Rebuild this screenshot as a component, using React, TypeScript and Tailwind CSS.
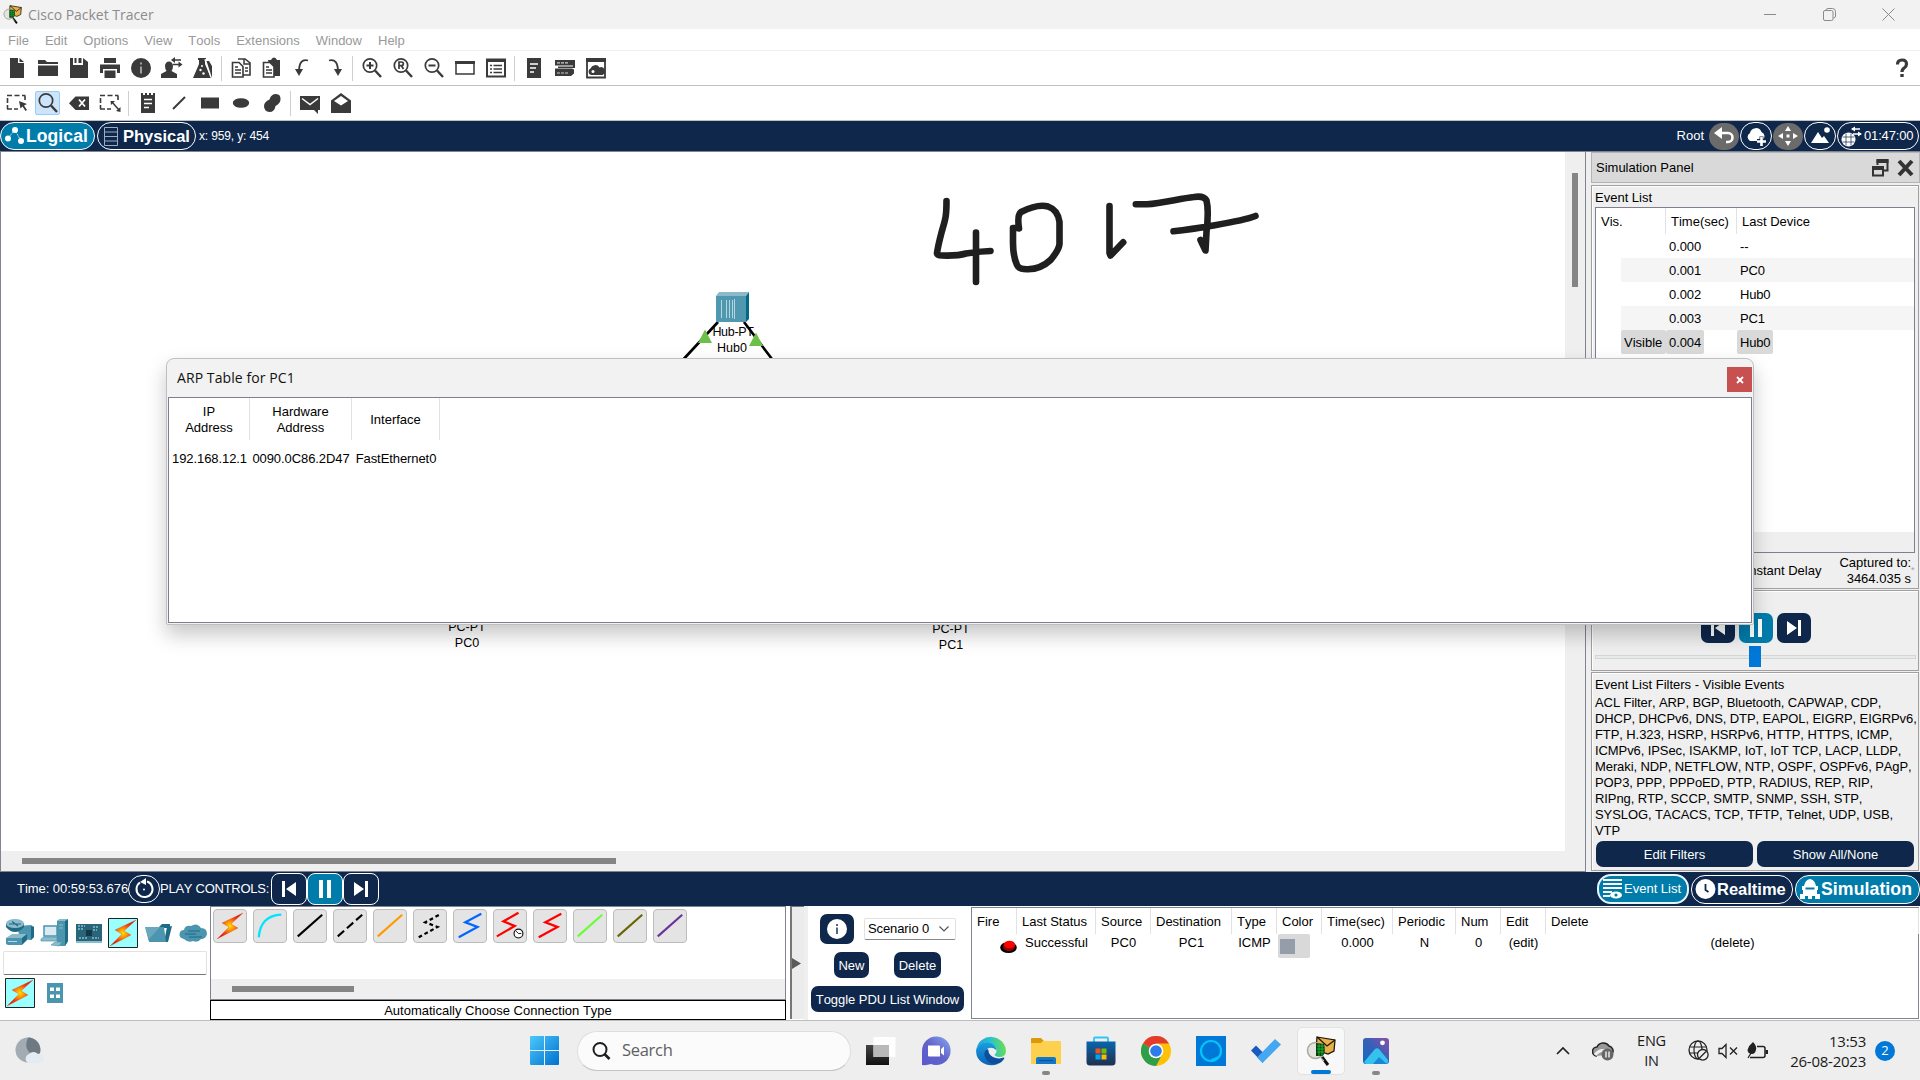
import React from 'react';

type P = { children?: React.ReactNode };
const NAVY = '#0e274b';
const INK = '#3a3a3a';

function Ic({ children, w = 24, h = 24, vb }: P & { w?: number; h?: number; vb?: string }) {
  return (
    <svg width={w} height={h} viewBox={vb ?? `0 0 ${w} ${h}`} fill="none" className="block shrink-0">
      {children}
    </svg>
  );
}

function Cell({ children, on }: P & { on?: boolean }) {
  return (
    <div className="flex w-[31px] shrink-0 items-center justify-center">
      {on ? (
        <div className="flex h-6 w-[25px] items-center justify-center rounded-[2px] border border-[#99cbf5] bg-[#cce5fa]">{children}</div>
      ) : (
        children
      )}
    </div>
  );
}
const Sep = () => <div className="ml-[3px] mr-[3px] h-[25px] w-px shrink-0 bg-[#d0d0d0]" />;

function TracerIcon({ s = 30 }: { s?: number }) {
  return (
    <Ic w={s} h={s} vb="0 0 30 30">
      <path d="M11 1 L29 4 L28 15 L22 18 L10 14Z" fill="#e7b04a" stroke="#1a1206" strokeWidth="1.2" />
      <path d="M11 1 L21 10 L29 4" stroke="#1a1206" strokeWidth="1.2" />
      <circle cx="9.5" cy="14.5" r="8" fill="#e4e4de" stroke="#a8a8a0" strokeWidth="1.5" />
      <path d="M10 7 L18 8 Q20 15 17 20 L10 20Z" fill="#0b3b12" />
      <path d="M11 10h7M11 13h7M11 16h7M13 8v12M16 8v12" stroke="#17b52c" strokeWidth="1" />
      <path d="M16 21 L22 29" stroke="#111" strokeWidth="3" />
      <path d="M15.5 22 L18 25" stroke="#ccc" strokeWidth="1" />
    </Ic>
  );
}

const Search = ({ t }: { t?: string }) => (
  <Ic>
    <circle cx="10" cy="9.500" r="6.700" stroke={INK} strokeWidth="1.700" />
    <path d="M15 14.500L21 21" stroke={INK} strokeWidth="2.400" />
    {t === '+' && <path d="M10 6v7M6.500 9.500h7" stroke={INK} strokeWidth="2" />}
    {t === '-' && <path d="M6.500 9.500h7" stroke={INK} strokeWidth="2" />}
    {t === 'R' && <path d="M8 13V6h2.500a1.800 1.800 0 0 1 0 3.700H8m2.500 0l2 3.300" stroke={INK} strokeWidth="1.700" />}
  </Ic>
);

function Toolbar1() {
  return (
    <div className="flex h-[35px] items-center border-b border-[#c0c0c0] pl-px">
      <Cell><Ic><path d="M5 2h8v5h6v15H5z M14.500 2l4.500 4h-4.500z" fill={INK} /></Ic></Cell>
      <Cell><Ic><path d="M2 4h7l2 2h11v2H2z M2 9.500h20V20H2z" fill={INK} /></Ic></Cell>
      <Cell><Ic><path d="M3 2h3v7h10V2l5 4v16H3z M11.500 2h3v5h-3z M7.500 2h2v5h-2z" fill={INK} /></Ic></Cell>
      <Cell><Ic><path d="M6 2h12v5H6z M2 8.500h20V17h-3v-4H5v4H2z M6.500 14.500h11V22h-11z" fill={INK} /></Ic></Cell>
      <Cell><Ic><circle cx="12" cy="12" r="10" fill={INK} /><path d="M12 6.500v2M12 10.500v7" stroke="#bbb" strokeWidth="1.600" /></Ic></Cell>
      <Cell>
        <Ic>
          <path d="M5 10a4 4.500 0 1 1 8 0q0 3-1.500 5l5.500 3v4H1v-4l5.500-3Q5 13 5 10z" fill={INK} />
          <path d="M13 4h8M13 8.500h8" stroke={INK} strokeWidth="1.500" /><path d="M11 4l4-3v6z M22.500 8.500l-4-3v6z" fill={INK} />
        </Ic>
      </Cell>
      <Cell>
        <Ic>
          <path d="M7 2h8v2h-1v4l6 14H2L8 8V4H7z" fill={INK} />
          <path d="M15 3l6 18" stroke="#fff" strokeWidth="3.500" /><path d="M15.500 5l5.500 17v-12l-3-5z" fill={INK} />
          <circle cx="9.500" cy="14" r="1.200" fill="#fff" /><circle cx="12.500" cy="17.500" r="1.200" fill="#fff" /><circle cx="11" cy="10" r="1" fill="#fff" />
        </Ic>
      </Cell>
      <Sep />
      <Cell>
        <Ic>
          <path d="M9 3h7l5 4v12h-8" fill="#fff" stroke={INK} strokeWidth="1.600" /><path d="M15 3v5h6" stroke={INK} strokeWidth="1.500" />
          <path d="M3.500 6.500H10l4 4V21H3.500z" fill="#fff" stroke={INK} strokeWidth="1.600" /><path d="M6 11h3M6 14h6M6 17h6M16 12h3M16 15h3" stroke={INK} strokeWidth="1.400" />
        </Ic>
      </Cell>
      <Cell>
        <Ic>
          <path d="M8 4h3q1-2.500 3-2.500T17 4h3v16h-8z" fill={INK} />
          <path d="M3.500 6.500H10l4 4V21H3.500z" fill="#fff" stroke={INK} strokeWidth="1.600" /><path d="M6 11h3M6 14h6M6 17h6" stroke={INK} strokeWidth="1.400" />
        </Ic>
      </Cell>
      <Cell><Ic><path d="M17 4.500Q8 2 8 16" stroke={INK} strokeWidth="1.800" /><path d="M4 13h8L8 20z" fill={INK} /></Ic></Cell>
      <Cell><Ic><path d="M7 4.500Q16 2 16 16" stroke={INK} strokeWidth="1.800" /><path d="M12 13h8L16 20z" fill={INK} /></Ic></Cell>
      <Sep />
      <Cell><Search t="+" /></Cell>
      <Cell><Search t="R" /></Cell>
      <Cell><Search t="-" /></Cell>
      <Cell><Ic><path d="M3 6h18v12H3z" stroke={INK} strokeWidth="1.500" /><path d="M2 5h20v3H2z" fill={INK} /></Ic></Cell>
      <Cell><Ic><path d="M3 3.500h18v17H3z" stroke={INK} strokeWidth="2" /><path d="M2 3h20v3H2z" fill={INK} /><path d="M6 9.500h2M6 13h2M6 16.500h2M9.500 9.500H18M9.500 13H18M9.500 16.500H18" stroke={INK} strokeWidth="1.600" /></Ic></Cell>
      <Sep />
      <Cell><Ic><path d="M5 2h14v20H5z" fill={INK} /><path d="M8 8h8M8 12h6M8 16h4" stroke="#fff" strokeWidth="1.500" /></Ic></Cell>
      <Cell><Ic><path d="M2 4h18v5.500H2z M22 4v8H5v-1.500h15V4z M2 12.500h17l2 1v4l-3 2.500H2z" fill={INK} /><path d="M4 6.800h12M4 17h12" stroke="#ccc" strokeWidth="1.200" strokeDasharray="3 1" /></Ic></Cell>
      <Cell><Ic><path d="M3 3h18v18.500H3z" stroke={INK} strokeWidth="1.800" /><path d="M2 2h20v4H2z" fill={INK} /><path d="M7 19a3.500 3.500 0 0 1-.5-6.500 5 5 0 0 1 9-1 4 4 0 0 1 3 7.500z" fill={INK} /><circle cx="9" cy="15.500" r="1.500" fill="#fff" /></Ic></Cell>
      <div className="ml-auto pr-[10px]">
        <Ic w={16} h={22}><path d="M3.500 7.500q0-4.500 4.500-4.500t4.500 4q0 2.500-2.300 4T8 15" stroke={INK} strokeWidth="3.200" /><path d="M6.300 17h3.400v3H6.300z" fill={INK} /></Ic>
      </div>
    </div>
  );
}

function Toolbar2() {
  const dash = 'M2 4.500h5M9.500 4.500h5M17 4.500h3.500M2.500 7v5M2.500 14v4M2 18h5M9 18h4M20 5v4';
  return (
    <div className="flex h-[35px] items-center border-b border-[#c0c0c0] pl-px">
      <Cell><Ic><path d={dash} stroke={INK} strokeWidth="1.600" /><path d="M14 10l8 3-3 1.500 3 4.500-1.500 1-3-4.500-2 2z" fill={INK} /></Ic></Cell>
      <Cell on><Search /></Cell>
      <Cell><Ic><path d="M8.500 5.500H22v13.500H8.500L2 12.300z" fill={INK} /><path d="M12 8.500l6 7M18 8.500l-6 7" stroke="#fff" strokeWidth="1.800" /></Ic></Cell>
      <Cell><Ic><path d={dash} stroke={INK} strokeWidth="1.600" /><path d="M14 11l7 8" stroke={INK} strokeWidth="1.500" /><path d="M12.500 10h4.500l-4 4zM22.500 21v-5l-4.500 4z" fill={INK} /></Ic></Cell>
      <Sep />
      <Cell><Ic><path d="M5 2h2v2h2V2h2v2h2V2h2v2h2V2h2v20H5z" fill={INK} /><path d="M8 8.500h8M8 12.500h8M8 16.500h5" stroke="#fff" strokeWidth="1.400" /></Ic></Cell>
      <Cell><Ic><path d="M6 18L18 6" stroke={INK} strokeWidth="2" /></Ic></Cell>
      <Cell><Ic><path d="M3 6.500h18v11H3z" fill={INK} /></Ic></Cell>
      <Cell><Ic><ellipse cx="12" cy="12" rx="8.200" ry="4.800" fill={INK} /></Ic></Cell>
      <Cell><Ic><path d="M9.500 8.500Q11 3 16 3q5 0 4.500 6-.5 3.500-5 6-1 6-6 6-5.500-.5-5.500-6Q4 11 9.500 8.500z" fill={INK} /></Ic></Cell>
      <Sep />
      <Cell><Ic><path d="M2 5h20v14h-2v4l-4-4H2z" fill={INK} /><path d="M4 7.500l8 6 8-6" stroke="#fff" strokeWidth="1.500" /></Ic></Cell>
      <Cell><Ic><path d="M2 9.500L12 2l10 7.500V22H2z" fill={INK} /><path d="M5 10l7-5 7 5-7 4.500z" fill="#fff" /></Ic></Cell>
    </div>
  );
}

const pill = 'flex items-center rounded-[14px] border border-white text-white';

function NavBar() {
  return (
    <div className="flex h-[30px] items-center bg-[#0e274b] text-[13px] text-white">
      <div className={`${pill} h-7 w-[95px] bg-[#007cab] pl-[3px]`}>
        <Ic w={22} h={24}><path d="M4 14L11 6l6 11" stroke="#bfe3f0" strokeWidth="1" strokeDasharray="2 1" /><circle cx="4" cy="14.500" r="3" fill="#fff" /><circle cx="11" cy="6" r="3" fill="#fff" /><circle cx="17" cy="17" r="3" fill="#fff" /></Ic>
        <span className="text-[17.500px] font-bold tracking-[0.1px]">Logical</span>
      </div>
      <div className={`${pill} ml-[2px] h-7 w-[99px] pl-[5px]`}>
        <Ic w={17} h={22}><path d="M1.500 2.500h13v18h-13zM1.500 7h13M1.500 11.500h13M1.500 16h13" stroke="#9dacc4" strokeWidth="1" /></Ic>
        <span className="ml-[3px] text-[16.500px] font-bold">Physical</span>
      </div>
      <span className="ml-[3px] text-[12px] tracking-[-0.150px]">x: 959, y: 454</span>
      <span className="ml-auto">Root</span>
      <div className="ml-[5px] flex h-[27px] w-[30px] items-center justify-center rounded-full bg-[#6b6b6b]">
        <Ic w={22} h={20}><path d="M6 7h9a4.500 4.500 0 0 1 0 9h-2" stroke="#fff" strokeWidth="2.600" /><path d="M9 1v12L1 7z" fill="#fff" /></Ic>
      </div>
      <div className="ml-[1px] flex h-7 w-8 items-center justify-center rounded-[14px] border border-white">
        <Ic w={24} h={22}><path d="M6 16a4.500 4.500 0 0 1 0-8 6 6 0 0 1 11.500-1 4.500 4.500 0 0 1 1 8v1z" fill="#fff" /><path d="M17.500 11.500v9M13 16h9" stroke={NAVY} strokeWidth="4" /><path d="M17.500 12v9M13 16.500h9" stroke="#fff" strokeWidth="2.600" /></Ic>
      </div>
      <div className="ml-[1px] flex h-[27px] w-[30px] items-center justify-center rounded-full bg-[#6b6b6b]">
        <Ic w={20} h={20}><path d="M10 0l3 5H7zM10 20l3-5H7zM0 10l5-3v6zM20 10l-5-3v6z" fill="#fff" /><path d="M8.500 8.500h3v3h-3z" fill="#fff" /></Ic>
      </div>
      <div className="ml-[1px] flex h-7 w-8 items-center justify-center rounded-[14px] border border-white">
        <Ic w={22} h={20}><path d="M2 17L9 6l4 6 2-2 5 7z" fill="#fff" /><circle cx="18" cy="4" r="2.800" fill="#fff" /></Ic>
      </div>
      <div className={`${pill} ml-[1px] mr-px h-7 w-[82px] pl-[3px]`}>
        <Ic w={22} h={24}><circle cx="7.500" cy="15.500" r="7" fill="#fff" /><path d="M1.500 13h12M1.500 18h12M5 9.500v12M10 9.500v12" stroke={NAVY} strokeWidth=".7" /><path d="M11 5h8M12 10h8" stroke="#fff" strokeWidth="1.500" /><path d="M10 5l4-2.500v5zM21 10l-4-2.500v5z" fill="#fff" /></Ic>
        <span className="ml-px tracking-[-0.150px]">01:47:00</span>
      </div>
    </div>
  );
}

function Canvas() {
  return (
    <div className="relative h-full w-full overflow-hidden text-center text-[12.500px] leading-4">
      <svg className="absolute left-0 top-0" width="1564" height="699" viewBox="1 152 1564 699" fill="none">
        <path d="M718 322L680 363M744 322L775 363" stroke="#000" strokeWidth="2.600" />
        <path d="M716 296h30v26h-30z" fill="#4f98b0" />
        <path d="M716 296l3-4h30l-3 4z" fill="#8ab9c9" /><path d="M746 296l3-4v27l-3 3z" fill="#006a87" />
        <path d="M721.500 300v18M726.500 300v18M729.500 300v18M732.500 300v18M734.500 299v20" stroke="#b5d6e0" strokeWidth="1" />
        <path d="M705 329.500l7 13.500h-14zM756 332.500l7 13.500h-14z" fill="#6cc04a" />
        <g stroke="#1f1f1f" strokeWidth="6.600" strokeLinecap="round" strokeLinejoin="round">
          <path d="M946.500 201C946.500 218 945 220 941.300 233.300Q938 246 937 253Q937 255.500 942 255.500Q958 256 966 253.500Q978 251.500 990.500 251M976 232.500V282" />
          <path d="M1019 228.500Q1017 215 1021 212C1031 207 1041 204.500 1048 206.500Q1058 210 1059.500 222V244Q1059 250 1050.500 260Q1041 269 1028 269.200Q1019 269.500 1017 265Q1013 256 1013 243V228H1018" />
          <path d="M1109.500 206L1109.500 253L1110.500 255.500L1123.200 242.300" />
          <path d="M1135.800 204.300H1147C1162 203.500 1180 198.500 1194 197Q1204 195.500 1206.500 200.500Q1209 210 1206.500 232L1205.500 250.500L1200.500 240M1173.500 231.300C1190 229.500 1240 222 1255.500 216" />
        </g>
      </svg>
      <div className="absolute left-[708px] top-[172px] w-[48px] whitespace-nowrap tracking-tight">Hub-PT</div>
      <div className="absolute left-[707px] top-[188px] w-[48px]">Hub0</div>
      <div className="absolute left-[436px] top-[467px] w-[60px]">PC-PT<br />PC0</div>
      <div className="absolute left-[920px] top-[469px] w-[60px]">PC-PT<br />PC1</div>
    </div>
  );
}

function ArpDialog() {
  const cols: [string[], string, string][] = [
    [['IP', 'Address'], '192.168.12.1', 'w-[81px]'],
    [['Hardware', 'Address'], '0090.0C86.2D47', 'w-[102px]'],
    [['Interface'], 'FastEthernet0', 'w-[88px]'],
  ];
  return (
    <div className="absolute left-[166px] top-[358px] z-10 flex h-[267px] w-[1588px] flex-col rounded-t-[8px] rounded-b-[2px] border border-[#bdc0c0] bg-[#f2f2f2] px-px pb-px shadow-[0_10px_20px_rgba(0,0,0,0.22)]">
      <div className="flex h-[38px] items-center pl-[9px]">
        <span className="pb-[2px] font-['Open_Sans','Noto_Sans',sans-serif] text-[14px] tracking-[0.080px] text-[#111]">ARP Table for PC1</span>
        <div className="ml-auto mt-2 flex size-[25px] items-center justify-center self-start bg-[#c75050]">
          <Ic w={8} h={8}><path d="M1 1l6 6M7 1L1 7" stroke="#fff" strokeWidth="1.800" /></Ic>
        </div>
      </div>
      <div className="flex flex-1 items-start border border-[#7f808f] bg-white text-center leading-4">
        {cols.map(([head, val, w], i) => (
          <div key={i} className={w}>
            <div className="flex h-[42px] flex-col justify-center border-r border-[#e2e2e2] pt-[2px]">{head.map((x) => <div key={x}>{x}</div>)}</div>
            <div className="mt-[11px] whitespace-nowrap tracking-[-0.080px]">{val}</div>
          </div>
        ))}
      </div>
    </div>
  );
}

const rows: [string, string, string][] = [
  ['', '0.000', '--'],
  ['', '0.001', 'PC0'],
  ['', '0.002', 'Hub0'],
  ['', '0.003', 'PC1'],
  ['Visible', '0.004', 'Hub0'],
];
const filters = [
  'ACL Filter, ARP, BGP, Bluetooth, CAPWAP, CDP,',
  'DHCP, DHCPv6, DNS, DTP, EAPOL, EIGRP, EIGRPv6,',
  'FTP, H.323, HSRP, HSRPv6, HTTP, HTTPS, ICMP,',
  'ICMPv6, IPSec, ISAKMP, IoT, IoT TCP, LACP, LLDP,',
  'Meraki, NDP, NETFLOW, NTP, OSPF, OSPFv6, PAgP,',
  'POP3, PPP, PPPoED, PTP, RADIUS, REP, RIP,',
  'RIPng, RTP, SCCP, SMTP, SNMP, SSH, STP,',
  'SYSLOG, TACACS, TCP, TFTP, Telnet, UDP, USB,',
  'VTP',
];

const Prev = () => <Ic w={18} h={18}><path d="M2 1h3v16H2zM16 2v14L6 9z" fill="#fff" /></Ic>;
const Next = () => <Ic w={18} h={18}><path d="M13 1h3v16h-3zM2 2v14l10-7z" fill="#fff" /></Ic>;
const Pause = () => <Ic w={18} h={20}><path d="M3 1h4v18H3zM11 1h4v18h-4z" fill="#fff" /></Ic>;
const group = 'border border-[#a0a0a0] bg-[#efefef] shadow-[inset_1px_1px_0_#fff]';

function SimulationPanel() {
  return (
    <div className="flex w-[334px] flex-col bg-[#efefef] pl-[5px]">
      <div className="flex h-[31px] items-center border border-[#b4b4b4] bg-[#d9d9d9] pl-1 pr-[5px]">
        <span className="pt-px">Simulation Panel</span>
        <div className="ml-auto flex items-center gap-[8px]">
          <Ic w={17} h={19}><path d="M5.500 7V2.500H15.500V12.500H12" stroke="#333" strokeWidth="2" /><path d="M4.500 1h12v4h-12z" fill="#333" /><path d="M1 10h10v7.500H1z" stroke="#333" strokeWidth="2" /><path d="M0 8h12v4H0z" fill="#333" /></Ic>
          <Ic w={17} h={18}><path d="M2 2l13 14M15 2L2 16" stroke="#333" strokeWidth="4" /></Ic>
        </div>
      </div>
      <div className={`${group} mt-[2px] flex h-[404px] w-[328px] flex-col px-[3px]`}>
        <div className="flex h-[21px] items-center pt-[2px]">Event List</div>
        <div className="flex h-[346px] flex-col border border-[#7f808f] bg-white">
          <div className="flex h-[26px] items-center">
            <span className="flex h-full w-[70px] items-center border-r border-[#e2e2e2] pl-[5px] pt-[2px]">Vis.</span>
            <span className="flex h-full w-[71px] items-center border-r border-[#e2e2e2] pl-[5px] pt-[2px]">Time(sec)</span>
            <span className="pl-[5px] pt-[2px]">Last Device</span>
          </div>
          {rows.map(([v, t, d], i) => (
            <div key={t} className={`ml-[25px] flex h-6 items-center ${i % 2 ? 'bg-[#f5f5f5]' : ''}`}>
              <div className="w-[45px]">{v && <span className="flex h-6 w-[45px] items-center rounded-[2px] bg-[#d9d9d9] pl-[3px] pt-px">{v}</span>}</div>
              <div className="w-[71px]"><span className={`flex h-6 w-[38px] items-center rounded-[2px] pl-[3px] pt-px tracking-[-0.100px] ${v ? 'bg-[#d9d9d9]' : ''}`}>{t}</span></div>
              <span className={`flex h-6 w-[36px] items-center rounded-[2px] pl-[3px] pt-px tracking-[-0.200px] ${v ? 'bg-[#d9d9d9]' : ''}`}>{d}</span>
            </div>
          ))}
          <div className="mt-auto h-5 bg-[#efefef]" />
        </div>
        <div className="flex flex-1 items-center justify-end leading-4">
          <span className="mr-[18px]">Constant Delay</span>
          <span className="text-right">Captured to:<br />3464.035 s</span>
          <span className="-mr-px mt-[-2px] w-[5px] text-[9px] text-[#a0a0a0]">*</span>
        </div>
      </div>
      <div className={`${group} mt-px flex h-[81px] w-[328px] flex-col items-center pt-[22px]`}>
        <div className="flex gap-1 pl-px">
          <div className="flex h-[30px] w-[34px] items-center justify-center rounded-[7px] bg-[#0e274b]"><Prev /></div>
          <div className="flex h-[30px] w-[34px] items-center justify-center rounded-[7px] bg-[#007cab]"><Pause /></div>
          <div className="flex h-[30px] w-[34px] items-center justify-center rounded-[7px] bg-[#0e274b]"><Next /></div>
        </div>
        <div className="mt-[3px] flex h-[21px] w-[321px] items-center justify-center">
          <div className="h-1 flex-1 border border-r-0 border-[#d4d6d6] bg-[#e7eaea]" />
          <div className="h-[21px] w-3 bg-[#0078d7]" />
          <div className="h-1 flex-1 border border-l-0 border-[#d4d6d6] bg-[#e7eaea]" />
        </div>
      </div>
      <div className={`${group} mt-px flex h-[199px] w-[328px] flex-col px-[3px]`}>
        <div className="mt-[3px] leading-[18px]">Event List Filters - Visible Events</div>
        <div className="mt-px whitespace-nowrap leading-4 tracking-[-0.090px]">{filters.map((f) => <div key={f}>{f}</div>)}</div>
        <div className="mt-[2px] flex gap-1 px-px text-white">
          <div className="flex h-[26px] flex-1 items-center justify-center rounded-[7px] bg-[#0e274b] pt-px">Edit Filters</div>
          <div className="flex h-[26px] flex-1 items-center justify-center rounded-[7px] bg-[#0e274b] pt-px">Show All/None</div>
        </div>
      </div>
    </div>
  );
}

function Workspace() {
  return (
    <div className="flex h-[721px] border-t border-[#80848f]">
      <div className="flex w-[1586px] flex-col border-x border-b border-[#80848f]">
        <div className="flex h-[699px]">
          <div className="w-[1564px]"><Canvas /></div>
          <div className="flex w-5 justify-center bg-[#efefef] pt-[21px]"><div className="h-[114px] w-[6px] bg-[#858585]" /></div>
        </div>
        <div className="flex h-5 items-center bg-[#efefef] pl-[21px]"><div className="h-[6px] w-[594px] bg-[#858585]" /></div>
      </div>
      <SimulationPanel />
    </div>
  );
}

function TimeBar() {
  const b = 'flex h-8 w-9 items-center justify-center rounded-[8px] border border-white';
  return (
    <div className="flex h-[34px] items-center bg-[#0e274b] pl-[17px] text-white">
      <span className="w-[111px] whitespace-nowrap tracking-[-0.050px]">Time: 00:59:53.676</span>
      <div className="flex h-7 w-8 items-center justify-center rounded-[14px] border border-white">
        <Ic w={22} h={22}><path d="M7 4.500a8 8 0 1 0 7 -1" stroke="#fff" strokeWidth="2" /><path d="M13 0v7L7 4z" fill="#fff" /><circle cx="11" cy="11.500" r="1" fill="#fff" /></Ic>
      </div>
      <span className="w-[111px] whitespace-nowrap tracking-[-0.260px]">PLAY CONTROLS:</span>
      <div className={b}><Prev /></div>
      <div className={`${b} bg-[#007cab]`}><Pause /></div>
      <div className={b}><Next /></div>
      <div className="ml-auto flex h-[30px] w-[92px] items-center rounded-[14px] border-2 border-[#e8f4f8] bg-[#007cab] pl-[3px]">
        <Ic w={22} h={22}><path d="M1 2h19M1 6h19M1 10h19M1 14h9M1 18h7" stroke="#fff" strokeWidth="1.800" /><ellipse cx="14" cy="17" rx="6" ry="3.600" fill="#fff" /><circle cx="14" cy="17" r="1.600" fill="#007cab" /></Ic>
        <span className="whitespace-nowrap">Event List</span>
      </div>
      <div className={`${pill} ml-[2px] h-[29px] w-[102px] pl-[3px]`}>
        <Ic w={22} h={22}><circle cx="10.500" cy="11" r="10" fill="#fff" /><path d="M10.500 6v6l3 2" stroke={NAVY} strokeWidth="1.800" /></Ic>
        <span className="text-[16.500px] font-bold">Realtime</span>
      </div>
      <div className={`${pill} ml-[2px] h-[29px] w-[125px] bg-[#007cab] pl-[3px]`}>
        <Ic w={22} h={22}><path d="M5 8q1-6 6-7 5 1 6 7h2v4h-1v4h3v5h-5v-3h-3v3h-4v-3H6v3H1v-5h3v-4H3V8z" fill="#fff" /><path d="M6.500 10.500h9" stroke="#007cab" strokeWidth="2" /></Ic>
        <span className="text-[17.700px] font-bold tracking-[0.070px]">Simulation</span>
      </div>
    </div>
  );
}

function Bolt({ boxed, s = 30 }: { boxed?: boolean; s?: number }) {
  return (
    <Ic w={s} h={s} vb="0 0 30 30">
      <defs><radialGradient id="bolt"><stop offset="0" stopColor="#ffe000" /><stop offset=".3" stopColor="#ff9a00" /><stop offset=".7" stopColor="#f43a10" /><stop offset="1" stopColor="#e01818" /></radialGradient></defs>
      {boxed && <path d="M.5.5h29v29H.5z" fill="#99ffff" stroke="#222" />}
      <path d="M28 2L7 12l7 4L2 28l21-11-7-4z" fill="url(#bolt)" stroke="#d04818" strokeWidth=".3" />
    </Ic>
  );
}

function Connections() {
  const line = (c: string, dash?: string) => <path d="M4 28L30 5" stroke={c} strokeWidth="2.200" strokeDasharray={dash} />;
  const zig = (c: string, dash?: string) => <path d="M5 29l20-11-13-5L29 4" stroke={c} strokeWidth="2.400" strokeDasharray={dash} />;
  const items = [
    <g key="a" />,
    <path key="b" d="M5 29Q7 6 29 5" stroke="#00e5ff" strokeWidth="2.400" />,
    line('#000'), line('#000', '9 4'), line('#ff9900'), zig('#000', '4 3'), zig('#0066ff'),
    <g key="h"><path d="M3 28l19-11-12-5L26 3" stroke="#f00" strokeWidth="2.400" /><circle cx="26" cy="25" r="4.700" fill="#fff" stroke="#111" strokeWidth="1.200" /><path d="M23.500 22.500l2.500 2.500h3" stroke="#111" /></g>,
    zig('#f00'), line('#66ff33'), line('#666600'), line('#663399'),
  ];
  return (
    <div className="flex w-[576px] flex-col">
      <div className="flex h-[94px] flex-col border border-[#80848f] bg-white">
        <div className="flex flex-1 gap-[6px] pl-[2px] pt-[2px]">
          {items.map((x, i) => (
            <div key={i} className="flex size-[34px] items-center justify-center rounded-[4px] border border-[#bcbcbc] bg-[#e4e4e4]">
              {i === 0 ? <Bolt /> : <Ic w={32} h={32} vb="0 0 34 34">{x}</Ic>}
            </div>
          ))}
        </div>
        <div className="flex h-5 items-center bg-[#efefef] pl-[21px]"><div className="h-[6px] w-[122px] bg-[#858585]" /></div>
      </div>
      <div className="flex h-5 items-center justify-center border border-black bg-white pt-[2px]">Automatically Choose Connection Type</div>
    </div>
  );
}

function DeviceTypes() {
  const T = '#4b95ae', L = '#8bbccb', D = '#1f6a84';
  return (
    <div className="flex h-full w-[210px] flex-col bg-white">
      <div className="mt-3 flex h-[30px] items-center gap-[5px] pl-[5px]">
        <Ic w={30} h={30}>
          <path d="M12 8l14-1 3 2v10l-3 3-11-1z" fill={T} /><path d="M26 8l3 1v10l-3 3z" fill={D} />
          <path d="M1 5v4q4 5 9 5t9-5V5z" fill={D} /><ellipse cx="10" cy="5.500" rx="9" ry="4.500" fill={L} /><path d="M4 6h12M7 3.500l6 4.500" stroke={D} strokeWidth="1.200" />
          <path d="M1 20l6-4h15l-5 4z" fill={L} /><path d="M1 20h16v7H3l-2-1z" fill={T} /><path d="M17 20l5-4v6l-5 5z" fill={D} /><path d="M3 23.500h9" stroke="#d5e8ee" strokeWidth=".8" />
        </Ic>
        <Ic w={30} h={30}>
          <path d="M17 3l3-2h8v22l-3 5h-8z" fill={T} /><path d="M25 3l3-2v22l-3 5z" fill={D} /><path d="M17 3l3-2h8l-3 2z" fill={L} /><path d="M19 7h4M19 10h4" stroke={L} />
          <path d="M4 8h13v10H4z" fill="#d9eaf0" stroke={T} strokeWidth="1.500" /><path d="M1 21l3-2h13v4H1z" fill={L} stroke={T} strokeWidth=".7" /><path d="M11 27l4-3h7l-3 4z" fill={L} stroke={T} strokeWidth=".6" />
        </Ic>
        <Ic w={28} h={30}><path d="M1 6h26v18H1z" fill="#28647a" /><path d="M1 23h26v2H1z" fill={L} /><path d="M3 8h7M3 11h5M18 9h6M18 12h4M4 20h8M17 20h7" stroke="#8bbccb" strokeWidth="1.500" strokeDasharray="2 1" /><path d="M11 12h6v6h-6z" fill="#163744" /></Ic>
        <Bolt boxed />
        <Ic w={30} h={30}><path d="M17 8l2-2h8v4H15z" fill={D} /><path d="M24 9l5-1-4 16h-4z" fill={D} /><path d="M2 9l19 0 2 15H6z" fill={T} /><path d="M2 9h15l-11 12z" fill={L} opacity=".5" /></Ic>
        <Ic w={30} h={30}><path d="M6 21q-5-1-4.500-5Q2 12 6 12q1-5 7-4 6-4 10 2 6 0 6 6-1 5-6 5-3 4-8 2-5 2-9-2z" fill={T} /><path d="M10 13h12M7 16h11M11 19h13" stroke={D} strokeWidth="1.200" /></Ic>
      </div>
      <div className="ml-[3px] mt-[3px] h-6 w-[204px] rounded-[2px] border border-[#e2e2e2] border-b-[#777]" />
      <div className="mt-[3px] flex items-center gap-3 pl-[5px]">
        <Bolt boxed />
        <Ic w={16} h={20}><path d="M0 0h16v20H0z" fill={T} /><path d="M3 4.500h4v3.500H3zM9 4.500h4v3.500H9zM3 11.500h4V15H3zM9 11.500h4V15H9z" fill="#fff" /></Ic>
      </div>
    </div>
  );
}

function PduTable() {
  const cols: [string, React.ReactNode, string][] = [
    ['Fire', <div key="f" className="flex justify-end pt-[6px]"><Ic w={17} h={13}><ellipse cx="8.500" cy="7.500" rx="8.300" ry="5.500" fill="#000" /><ellipse cx="9" cy="6.500" rx="6" ry="4.500" fill="#900" /><ellipse cx="9.500" cy="4.500" rx="5.500" ry="3.800" fill="#f00" /></Ic></div>, 'w-[45px]'],
    ['Last Status', 'Successful', 'w-[79px]'],
    ['Source', 'PC0', 'w-[55px]'],
    ['Destination', 'PC1', 'w-[81px]'],
    ['Type', 'ICMP', 'w-[45px]'],
    ['Color', <div key="c" className="ml-[1px] flex h-6 w-8 items-center rounded-[2px] bg-[#d9d9d9] pl-[2px]"><div className="size-[15px] bg-[#959dab]" /></div>, 'w-[45px]'],
    ['Time(sec)', '0.000', 'w-[71px]'],
    ['Periodic', 'N', 'w-[63px]'],
    ['Num', '0', 'w-[45px]'],
    ['Edit', '(edit)', 'w-[45px]'],
    ['Delete', '(delete)', 'w-[373px]'],
  ];
  return (
    <div className="mt-px flex h-[112px] w-[948px] border border-[#80848f] bg-white leading-4">
      {cols.map(([h, v, w]) => (
        <div key={h} className={`${w} shrink-0`}>
          <div className="flex h-[26px] items-center whitespace-nowrap border-r border-[#e2e2e2] pl-[5px] pt-px">{h}</div>
          {typeof v === 'string' ? <div className="pt-px text-center">{v}</div> : v}
        </div>
      ))}
    </div>
  );
}

function BottomPanel() {
  const btn = 'flex h-[26px] items-center justify-center rounded-[7px] bg-[#0e274b] text-white whitespace-nowrap pt-px';
  return (
    <div className="flex h-[115px] border-b border-[#bdbdbd] bg-white">
      <DeviceTypes />
      <Connections />
      <div className="ml-[4px] flex h-[113px] w-[14px] items-center border-l-2 border-t border-[#777] bg-[#ececec]"><Ic w={9} h={11}><path d="M0 0l9 5.500L0 11z" fill="#5a5a5a" /></Ic></div>
      <div className="w-[4px] bg-[#efefef]" />
      <div className="flex w-[163px] flex-col pl-[2px] pt-2">
        <div className="flex items-center pl-[10px]">
          <div className="flex h-[30px] w-[34px] items-center justify-center rounded-[7px] bg-[#0e274b]">
            <Ic w={20} h={20}><circle cx="10" cy="10" r="10" fill="#fff" /><path d="M10 5v2M10 8.500V15" stroke={NAVY} strokeWidth="1.400" /></Ic>
          </div>
          <div className="ml-[10px] flex h-[22px] w-[92px] items-center rounded-[2px] border border-[#e2e2e2] border-b-[#888] pl-[3px]">
            <span className="whitespace-nowrap tracking-[-0.100px]">Scenario 0</span>
            <span className="ml-auto pr-[6px]"><Ic w={10} h={6}><path d="M.5.500L5 5 9.500.500" stroke="#555" strokeWidth="1.200" /></Ic></span>
          </div>
        </div>
        <div className="mt-2 flex pl-6">
          <div className={`${btn} w-[35px]`}>New</div>
          <div className={`${btn} ml-[25px] w-[47px]`}>Delete</div>
        </div>
        <div className={`${btn} ml-px mt-2 w-[153px] tracking-[-0.050px]`}>Toggle PDU List Window</div>
      </div>
      <PduTable />
    </div>
  );
}

function TaskIcon({ children, mark, active }: P & { mark?: boolean; active?: boolean }) {
  return (
    <div className={`relative mx-[3.500px] flex h-12 w-12 items-center justify-center rounded-[5px] ${active ? 'border border-[#e2e2e2] bg-[#f8f8f8]' : ''}`}>
      {children}
      {(mark || active) && <div className={`absolute bottom-0 h-1 rounded-full ${active ? 'w-5 bg-[#0078d4]' : 'w-2 bg-[#868686]'}`} />}
    </div>
  );
}

function Taskbar() {
  return (
    <div className="flex h-[59px] items-center bg-[#eeeeee] font-['Open_Sans','Noto_Sans',sans-serif] text-[#1a1a1a]">
      <div className="ml-[14px] w-[516px]">
        <Ic w={30} h={30}><circle cx="14" cy="14" r="12.500" fill="#a3abb3" /><path d="M14 1.500A12.500 12.500 0 0 1 26 17q-6 4-11-1-5-5-1-14.500z" fill="#6f7981" /><path d="M14 27a5 5 0 0 1 1-9 6 6 0 0 1 9 0 4.500 4.500 0 0 1 3 9z" fill="#e4ebf2" /></Ic>
      </div>
      <Ic w={29} h={29}>
        <defs><linearGradient id="win" x1="0" y1="0" x2="29" y2="29" gradientUnits="userSpaceOnUse"><stop stopColor="#4cc8fb" /><stop offset="1" stopColor="#0070cf" /></linearGradient></defs>
        <path d="M0 1a1 1 0 0 1 1-1h13v14H0zM15 0h13a1 1 0 0 1 1 1v13H15zM0 15h14v14H1a1 1 0 0 1-1-1zM15 15h14v13a1 1 0 0 1-1 1H15z" fill="url(#win)" />
      </Ic>
      <div className="ml-[18px] flex h-10 w-[274px] items-center rounded-full border border-[#dedede] border-b-[#c4c4c4] bg-[#fbfbfb] pl-[14px] text-[16.500px] text-[#606060]">
        <Ic w={20} h={20}><circle cx="8" cy="8.500" r="6.500" stroke="#1f1f1f" strokeWidth="2" /><path d="M12.500 13l5 5" stroke="#1f1f1f" strokeWidth="2.600" /></Ic>
        <span className="ml-[10px] tracking-[-0.300px]">Search</span>
      </div>
      <div className="ml-[2px] flex">
        <TaskIcon>
          <Ic w={30} h={28}><defs><linearGradient id="tv" x1="0" y1="0" x2="0" y2="1"><stop stopColor="#444" /><stop offset="1" stopColor="#111" /></linearGradient></defs><path d="M0 8h23v20H0z" fill="url(#tv)" /><path d="M7.500 0h22v20h-22z" fill="#fff" fillOpacity=".92" /><path d="M7.500 8H23v12H7.500z" fill="#b9b9b9" /></Ic>
        </TaskIcon>
        <TaskIcon>
          <Ic w={30} h={30}><defs><linearGradient id="chat" x1="0" y1="1" x2="1" y2="0"><stop stopColor="#5b57d0" /><stop offset=".5" stopColor="#6264c8" /><stop offset="1" stopColor="#86a8f5" /></linearGradient></defs><path d="M1 29V15A14.300 14.300 0 1 1 15 29q-3 0-5-1-4 1.500-9 1z" fill="url(#chat)" /><path d="M7 9.500h11a1 1 0 0 1 1 1v10h-11a1 1 0 0 1-1-1zM20 13l3-2.500v9L20 17z" fill="#fff" /></Ic>
        </TaskIcon>
        <TaskIcon>
          <Ic w={30} h={30}>
            <defs>
              <linearGradient id="eg" x1="0" y1=".6" x2="1" y2=".5"><stop stopColor="#1a9be0" /><stop offset=".5" stopColor="#2bc0d0" /><stop offset="1" stopColor="#6be04c" /></linearGradient>
              <linearGradient id="eb" x1="0" y1="0" x2="0" y2="1"><stop stopColor="#1aa0e0" /><stop offset="1" stopColor="#0b62b8" /></linearGradient>
            </defs>
            <path d="M.3 13Q4 5 13 6q8 1 7 8-3-3-7-2-5 2-3 9 3 6 12 7Q14 31 7 27 -1 22 .3 13z" fill="url(#eb)" />
            <path d="M.3 13A15 15 0 0 1 30 15q0 6-7 6-4-.5-4.500-2.500 3-2 1.500-6Q17 6 10 6.500 3 7 .3 13z" fill="url(#eg)" />
            <path d="M11 13q-4 3-2 8 3 8 12 7 5-1 7.500-6-.500-1-2-.300Q22 23.500 17 21q-5-3-4.500-7z" fill="#0c4f9e" />
          </Ic>
        </TaskIcon>
        <TaskIcon mark>
          <Ic w={30} h={26}><path d="M0 1a1 1 0 0 1 1-1h9l3 3v6H0z" fill="#dd9a06" /><path d="M0 5h10l2-2h17a1 1 0 0 1 1 1v22H0z" fill="#fdd04e" /><path d="M5 26v-5a2 2 0 0 1 2-2h16a2 2 0 0 1 2 2v5z" fill="#1478c8" /><path d="M8 22.500h14" stroke="#0b5394" strokeWidth="1.200" /></Ic>
        </TaskIcon>
        <TaskIcon>
          <Ic w={30} h={30}><defs><linearGradient id="st" x1="0" y1="0" x2="0" y2="1"><stop stopColor="#0866ad" /><stop offset="1" stopColor="#203050" /></linearGradient></defs><path d="M8 6V2.500a1 1 0 0 1 1-1h12a1 1 0 0 1 1 1V6" stroke="#2cc5f5" strokeWidth="1.800" /><path d="M.5 5.500h29V26a3.500 3.500 0 0 1-3.500 3.500H4A3.500 3.500 0 0 1 .5 26z" fill="url(#st)" /><path d="M9.500 12.500h5v5h-5z" fill="#f25022" /><path d="M15.500 12.500h5v5h-5z" fill="#7fba00" /><path d="M9.500 18.500h5v5h-5z" fill="#00a4ef" /><path d="M15.500 18.500h5v5h-5z" fill="#ffb900" /></Ic>
        </TaskIcon>
        <TaskIcon>
          <Ic w={30} h={30}><circle cx="15" cy="15" r="15" fill="#ffc107" /><path d="M15 15L2 7.500A15 15 0 0 0 15 30L21.500 18z" fill="#2e9e4b" /><path d="M15 15L2 7.500A15 15 0 0 1 28 7.500H15z" fill="#e33b2e" /><circle cx="15" cy="15" r="7.300" fill="#fff" /><circle cx="15" cy="15" r="5.800" fill="#2f7bea" /></Ic>
        </TaskIcon>
        <TaskIcon>
          <Ic w={30} h={30}><path d="M0 0h30v30H0z" fill="#0078d7" /><circle cx="15" cy="15" r="10" stroke="#05c3f7" strokeWidth="2.200" /><path d="M14 26.300Q14 22 19 21l5-1q-4 6-10 6.300z" fill="#05c3f7" /><circle cx="15" cy="14.500" r="8.200" fill="#0078d7" /></Ic>
        </TaskIcon>
        <TaskIcon>
          <Ic w={30} h={26}><path d="M0 12.500l5-5 7.500 7.500-.5 10z" fill="#185abd" /><path d="M24 1l6 5.500L11.500 25l-5.500-5.500z" fill="#45a6f2" /></Ic>
        </TaskIcon>
        <TaskIcon active><TracerIcon /></TaskIcon>
        <TaskIcon mark>
          <Ic w={26} h={26}><defs><linearGradient id="ph" x1="0" y1="1" x2="1" y2="0"><stop stopColor="#1668c0" /><stop offset=".5" stopColor="#3560b8" /><stop offset="1" stopColor="#8b4fa8" /></linearGradient></defs><path d="M3 0h20a3 3 0 0 1 3 3v20a3 3 0 0 1-3 3H3a3 3 0 0 1-3-3V3a3 3 0 0 1 3-3z" fill="url(#ph)" /><path d="M1 24L12 11q2-1.500 4 0l9 11v1a3 3 0 0 1-3 3H3z" fill="#35c3ee" /><path d="M10 26l6-7 8 7z" fill="#1b86d8" /><circle cx="19.500" cy="4.800" r="2.400" fill="#fff" /></Ic>
        </TaskIcon>
      </div>
      <div className="ml-auto flex items-center">
        <Ic w={14} h={9}><path d="M1 8l6-6 6 6" stroke="#222" strokeWidth="1.700" /></Ic>
        <div className="ml-[22px]"><Ic w={22} h={20}><path d="M5 15a4.500 4.500 0 0 1 0-9 7 7 0 0 1 12-1 5 5 0 0 1 3 8" fill="#999" stroke="#222" strokeWidth="1.500" /><path d="M3 14q5-6 10-4" stroke="#eee" strokeWidth="3" /><circle cx="15.500" cy="13.500" r="6" fill="#666" /><path d="M14 10.500v6M17 10.500v6" stroke="#fff" strokeWidth="1.300" /></Ic></div>
        <div className="ml-[22px] w-[31px] text-center text-[14.500px] leading-5 tracking-[-0.250px]">ENG<br />IN</div>
        <div className="ml-[21px]"><Ic w={21} h={21}><circle cx="10" cy="10" r="9" stroke="#222" strokeWidth="1.300" /><ellipse cx="10" cy="10" rx="4" ry="9" stroke="#222" strokeWidth="1.200" /><path d="M1.500 7h17M1.500 13h17" stroke="#222" strokeWidth="1.200" /><circle cx="14.800" cy="14.800" r="5.300" fill="#eee" stroke="#222" strokeWidth="1.300" /><path d="M11.500 18l6.500-6.500" stroke="#222" strokeWidth="1.300" /></Ic></div>
        <div className="ml-[9px]"><Ic w={20} h={16}><path d="M1 5.500h3l4-4v13l-4-4H1z" stroke="#222" strokeWidth="1.300" /><path d="M12 4.500l7 7M19 4.500l-7 7" stroke="#222" strokeWidth="1.300" /></Ic></div>
        <div className="ml-[9px]"><Ic w={21} h={18}><path d="M10 4.500h6a2 2 0 0 1 2 2v7a2 2 0 0 1-2 2H3" stroke="#222" strokeWidth="1.500" /><path d="M18.500 8h2.500v4h-2.500z" fill="#222" /><path d="M6 0q4 4 3 8-1 4-4 4Q1 12 .5 8 2 3 6 0z" fill="#222" /><path d="M1 16l3-5 2-5" stroke="#222" strokeWidth="1.200" /></Ic></div>
        <div className="ml-[12px] w-[86px] whitespace-nowrap text-right text-[15px] leading-5 tracking-[-0.250px]">13:53<br />26-08-2023</div>
        <div className="ml-[9px] mr-[25px] flex size-5 items-center justify-center rounded-full bg-[#0078d7] text-[13px] text-white">2</div>
      </div>
    </div>
  );
}

export default function App() {
  return (
    <div className="relative flex h-[1080px] w-[1920px] flex-col overflow-hidden bg-white font-['Liberation_Sans',Arial,sans-serif] text-[13px] text-black [font-kerning:none]">
      <div className="flex h-[29px] items-center bg-[#f2f2f2] pl-[3px]">
        <TracerIcon s={19} />
        <span className="ml-[6px] font-['Open_Sans','Noto_Sans',sans-serif] text-[14px] tracking-[-0.020px] text-[#8c8c8c]">Cisco Packet Tracer</span>
        <div className="ml-auto flex items-center gap-[46px] pr-[25px]">
          <Ic w={13} h={13}><path d="M0 6.500h12" stroke="#8a8a8a" /></Ic>
          <Ic w={13} h={13}><path d="M.5 4a1.500 1.500 0 0 1 1.500-1.500h6.500A1.500 1.500 0 0 1 10 4v7a1.500 1.500 0 0 1-1.500 1.500H2A1.500 1.500 0 0 1 .5 11zM3 2.500Q3 .5 5 .5h4.500q3 0 3 3V8q0 2-2 2" stroke="#8a8a8a" /></Ic>
          <Ic w={13} h={13}><path d="M.5.5l12 12M12.500.5L.5 12.500" stroke="#8a8a8a" /></Ic>
        </div>
      </div>
      <div className="flex h-[22px] items-center gap-4 border-b border-[#efefef] pl-2 pt-[2px] text-[#999]">
        {['File', 'Edit', 'Options', 'View', 'Tools', 'Extensions', 'Window', 'Help'].map((m) => <span key={m}>{m}</span>)}
      </div>
      <Toolbar1 />
      <Toolbar2 />
      <NavBar />
      <Workspace />
      <TimeBar />
      <BottomPanel />
      <Taskbar />
      <ArpDialog />
    </div>
  );
}
